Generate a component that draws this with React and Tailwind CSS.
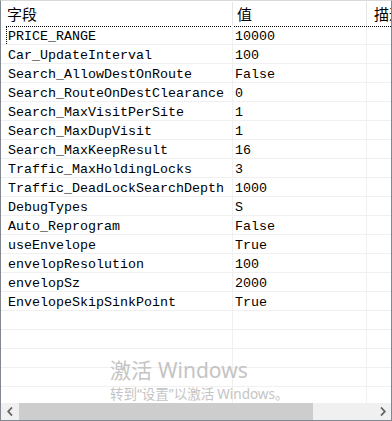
import React from "react";

const rows = [
  ["PRICE_RANGE", "10000"],
  ["Car_UpdateInterval", "100"],
  ["Search_AllowDestOnRoute", "False"],
  ["Search_RouteOnDestClearance", "0"],
  ["Search_MaxVisitPerSite", "1"],
  ["Search_MaxDupVisit", "1"],
  ["Search_MaxKeepResult", "16"],
  ["Traffic_MaxHoldingLocks", "3"],
  ["Traffic_DeadLockSearchDepth", "1000"],
  ["DebugTypes", "S"],
  ["Auto_Reprogram", "False"],
  ["useEnvelope", "True"],
  ["envelopResolution", "100"],
  ["envelopSz", "2000"],
  ["EnvelopeSkipSinkPoint", "True"],
];

const blanks = Array.from({ length: 6 }, () => ["", ""]);

const mono = { fontFamily: '"Liberation Mono", "DejaVu Sans Mono", monospace' };
const latin = { fontFamily: '"Noto Sans", sans-serif' };

function Row({ name, value, first }) {
  return (
    <div className="flex h-[19px] shrink-0 border-b border-[#f0f0f0] text-[13.33px] leading-[15px] text-black" style={mono}>
      <div className="relative w-[232px] shrink-0 overflow-hidden whitespace-nowrap border-r border-[#f0f0f0] pl-[7px] pt-[3px]">
        {first && (
          <div className="absolute left-[5px] top-0 h-full border-l border-dotted border-black" />
        )}
        {name}
      </div>
      <div className="w-[134px] shrink-0 overflow-hidden whitespace-nowrap border-r border-[#f0f0f0] pl-[2px] pt-[3px]">
        {value}
      </div>
      <div className="flex-1" />
    </div>
  );
}

export default function App() {
  return (
    <div
      className="relative flex h-[421px] w-[392px] flex-col overflow-hidden border border-[#828790] border-t-[#d9d9d9] bg-white"
      style={{ fontFamily: '"Noto Sans CJK SC", "Noto Sans", sans-serif' }}
    >
      {/* column headers */}
      <div className="flex h-[25px] shrink-0 pt-[1px] text-[15px] leading-[24px] text-black">
        <div className="w-[232px] shrink-0 border-r border-[#e5e5e5] pl-[6px]">字段</div>
        <div className="w-[134px] shrink-0 border-r border-[#e5e5e5] pl-[4px]">值</div>
        <div className="flex-1 overflow-hidden whitespace-nowrap pl-[7px]">描述</div>
      </div>

      {/* grid body */}
      <div className="relative flex flex-1 flex-col overflow-hidden">
        <div className="absolute left-[5px] right-0 top-0 border-t border-dotted border-black" />
        {rows.map(([n, v], i) => (
          <Row key={n} name={n} value={v} first={i === 0} />
        ))}
        {blanks.map((_, i) => (
          <Row key={"b" + i} name="" value="" />
        ))}
      </div>

      {/* horizontal scrollbar */}
      <div className="flex h-[17px] shrink-0 items-center bg-[#f0f0f0]">
        <div className="flex h-full w-[17px] items-center justify-center">
          <svg width="6" height="9" viewBox="0 0 6 9">
            <polyline points="5,0.5 1.2,4.5 5,8.5" fill="none" stroke="#606060" strokeWidth="1.8" />
          </svg>
        </div>
        <div className="flex h-full flex-1 items-stretch">
          <div className="ml-[1px] w-[294px] bg-[#cdcdcd]" />
        </div>
        <div className="flex h-full w-[17px] items-center justify-center">
          <svg width="6" height="9" viewBox="0 0 6 9">
            <polyline points="1,0.5 4.8,4.5 1,8.5" fill="none" stroke="#606060" strokeWidth="1.8" />
          </svg>
        </div>
      </div>

      {/* system watermark overlay */}
      <div className="pointer-events-none absolute left-[109px] top-[355px] whitespace-nowrap text-[#c4c4c4]">
        <div className="text-[21px] leading-[27px]">
          激活<span className="ml-[6px]" style={latin}>Windows</span>
        </div>
        <div className="text-[13.5px] leading-[18px]">
          转到<span style={latin}>“</span>设置<span style={latin}>”</span>以激活 <span style={latin}>Windows</span>。
        </div>
      </div>
    </div>
  );
}
